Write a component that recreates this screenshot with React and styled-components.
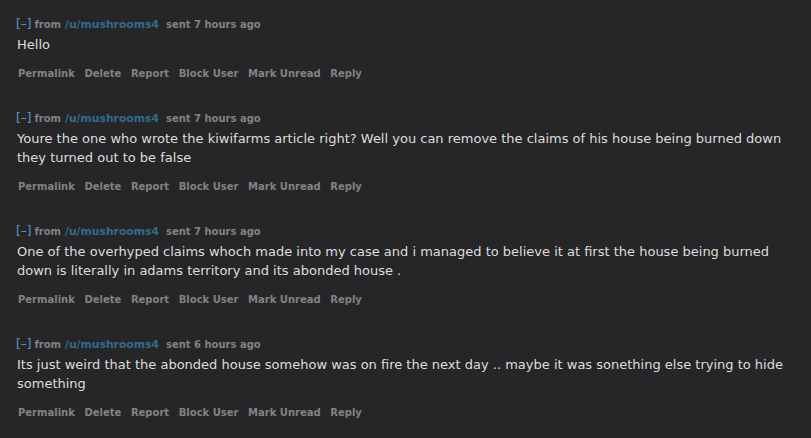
import React from 'react';
import styled, { createGlobalStyle } from 'styled-components';

const messages = [
  { time: 'sent 7 hours ago', body: 'Hello' },
  {
    time: 'sent 7 hours ago',
    body: 'Youre the one who wrote the kiwifarms article right? Well you can remove the claims of his house being burned down they turned out to be false',
  },
  {
    time: 'sent 7 hours ago',
    body: 'One of the overhyped claims whoch made into my case and i managed to believe it at first the house being burned down is literally in adams territory and its abonded house .',
  },
  {
    time: 'sent 6 hours ago',
    body: 'Its just weird that the abonded house somehow was on fire the next day .. maybe it was sonething else trying to hide something',
  },
];

const actions = ['Permalink', 'Delete', 'Report', 'Block User', 'Mark Unread', 'Reply'];

const GlobalStyle = createGlobalStyle`
  html, body {
    margin: 0;
    padding: 0;
    background: #262628;
  }
  body {
    font-family: "DejaVu Sans", Verdana, sans-serif;
  }
`;

const Page = styled.div`
  width: 811px;
  height: 438px;
  overflow: hidden;
  background: #262628;
  padding: 17px 16px 0 16px;
  box-sizing: border-box;
`;

const Message = styled.div`
  margin-bottom: 30px;
`;

const Tagline = styled.div`
  font-size: 10px;
  font-weight: bold;
  color: #828282;
  line-height: 14px;
  display: flex;
  align-items: baseline;
  gap: 4px;
`;

const Expand = styled.span`
  color: #5c97cc;
  font-weight: normal;
  font-size: 12px;
  margin-right: -1px;
`;

const Author = styled.span`
  color: #336b8e;
  font-size: 10.8px;
  margin-right: 3px;
`;

const Body = styled.div`
  font-size: 13px;
  color: #dddddd;
  line-height: 19px;
  padding: 3px 0 0 1px;
  max-width: 780px;
`;

const Buttons = styled.ul`
  list-style: none;
  margin: 0;
  padding: 13px 0 0 2px;
  display: flex;
  gap: 9.6px;
`;

const Button = styled.li`
  font-size: 10px;
  font-weight: bold;
  color: #828282;
  line-height: 14px;
`;

const App = () => (
  <Page>
    <GlobalStyle />
    {messages.map((m, i) => (
      <Message key={i}>
        <Tagline>
          <Expand>[–]</Expand>
          <span>from</span>
          <Author>/u/mushrooms4</Author>
          <span>{m.time}</span>
        </Tagline>
        <Body>{m.body}</Body>
        <Buttons>
          {actions.map(a => (
            <Button key={a}>{a}</Button>
          ))}
        </Buttons>
      </Message>
    ))}
  </Page>
);

export default App;
